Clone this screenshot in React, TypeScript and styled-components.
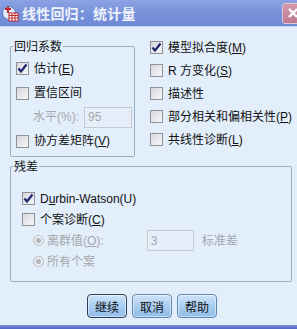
import styled, { createGlobalStyle } from 'styled-components';

const GlobalStyle = createGlobalStyle`
  html, body {
    margin: 0;
    padding: 0;
    background: #e3eefb;
  }
  body {
    font-family: "Liberation Sans", "Noto Sans CJK SC", sans-serif;
    font-size: 12px;
    color: #111;
  }
`;

const StWindow = styled.div`
  width: 297px;
  height: 329px;
  display: flex;
  flex-direction: column;
  overflow: hidden;
  background: #e3eefb;
`;

const StTitleBar = styled.div`
  height: 27px;
  flex-shrink: 0;
  display: flex;
  align-items: center;
  padding-left: 2px;
  background: linear-gradient(#8ba3e3, #7690da 55%, #6f8ad8);
  border-bottom: 1px solid #c9d6f2;
  box-sizing: border-box;
`;

const StTitle = styled.span`
  margin-left: 3px;
  font-family: "Noto Sans CJK SC", sans-serif;
  font-size: 14px;
  font-weight: bold;
  color: #eef2fb;
  letter-spacing: 0.2px;
  flex: 1;
`;

const StClose = styled.div`
  width: 20px;
  height: 19px;
  margin-right: -7px;
  border-radius: 3px;
  border: 1px solid #e3c6d3;
  background: linear-gradient(#d49aaa, #bf7a90);
  display: flex;
  align-items: center;
  justify-content: center;
`;

const StBody = styled.div`
  flex: 1;
  padding: 12px 5px 0 10px;
  display: flex;
  flex-direction: column;
`;

const StTop = styled.div`
  display: flex;
`;

const StGroup = styled.fieldset<{ $width: number }>`
  margin: 0;
  padding: 0;
  min-width: 0;
  width: ${(p) => p.$width}px;
  box-sizing: border-box;
  border: 1px solid #9aafc6;
  border-radius: 2px;
`;

const StLegend = styled.legend`
  font-family: "Noto Sans CJK SC", sans-serif;
  font-size: 12px;
  line-height: 14px;
  padding: 0 1px;
  margin-left: 2px;
  color: #111;
`;

const StGroupContent = styled.div<{ $pt: number; $pl: number; $pb: number }>`
  display: flex;
  flex-direction: column;
  padding: ${(p) => p.$pt}px 0 ${(p) => p.$pb}px ${(p) => p.$pl}px;
`;

const StRow = styled.div<{ $h: number; $indent?: number }>`
  height: ${(p) => p.$h}px;
  display: flex;
  align-items: center;
  padding-left: ${(p) => p.$indent ?? 0}px;
  white-space: nowrap;
`;

const StLabel = styled.span<{ $disabled?: boolean; $gap?: number }>`
  margin-left: ${(p) => p.$gap ?? 5}px;
  font-family: "Liberation Sans", "Noto Sans CJK SC", sans-serif;
  font-size: 12px;
  line-height: 16px;
  color: ${(p) => (p.$disabled ? '#a3a7ad' : '#111')};
  u {
    text-underline-offset: 1px;
  }
`;

const StBox = styled.span`
  width: 13px;
  height: 13px;
  box-sizing: border-box;
  border: 1px solid #8f9296;
  background: linear-gradient(135deg, #d6d8dc, #f7f7f8);
  display: inline-flex;
  align-items: center;
  justify-content: center;
  flex-shrink: 0;
`;

const StRadio = styled.span`
  width: 11px;
  height: 11px;
  box-sizing: border-box;
  border-radius: 50%;
  border: 1px solid #b7bbc0;
  background: #eceef1;
  display: inline-flex;
  align-items: center;
  justify-content: center;
  flex-shrink: 0;
`;

const StDot = styled.span`
  width: 5px;
  height: 5px;
  border-radius: 50%;
  background: #b3b7bc;
`;

const StInput = styled.div<{ $w: number; $h: number; $ml: number }>`
  width: ${(p) => p.$w}px;
  height: ${(p) => p.$h}px;
  margin-left: ${(p) => p.$ml}px;
  box-sizing: border-box;
  border: 1px solid #c5cad1;
  background: #e6eff9;
  color: #a3a7ad;
  font-family: "Liberation Sans", sans-serif;
  font-size: 12px;
  display: flex;
  align-items: center;
  padding-left: 3px;
`;

const StRightCol = styled.div`
  display: flex;
  flex-direction: column;
  margin-left: 15px;
  margin-top: -3px;
`;

const StResidual = styled.div`
  margin-top: 2px;
`;

const StButtons = styled.div`
  display: flex;
  justify-content: center;
  gap: 5px;
  margin-top: 12px;
  padding-left: 2px;
`;

const StButton = styled.button<{ $default?: boolean }>`
  width: 40px;
  height: 24px;
  padding: 0;
  border-radius: 4px;
  border: 1px solid ${(p) => (p.$default ? '#2c3f5c' : '#5d87b4')};
  background: linear-gradient(#cfe4f8, #a9cdf0 50%, #8fbde9);
  font-family: "Noto Sans CJK SC", sans-serif;
  font-size: 12px;
  color: #111;
  box-shadow: inset 0 0 0 1px rgba(255, 255, 255, 0.5);
`;

const StBottomBar = styled.div`
  height: 4px;
  flex-shrink: 0;
  background: linear-gradient(#7b8fdb, #5064c4);
`;

const Check = ({ checked }: { checked?: boolean }) => (
  <StBox>
    {checked && (
      <svg width="11" height="11" viewBox="0 0 11 11">
        <path d="M1.5 5.5 L4 8.5 L9.5 1.5" fill="none" stroke="#1f2470" strokeWidth="2.2" />
      </svg>
    )}
  </StBox>
);

const Radio = () => (
  <StRadio>
    <StDot />
  </StRadio>
);

const AppIcon = () => (
  <svg width="17" height="17" viewBox="0 0 17 17">
    <circle cx="7" cy="8" r="6.5" fill="#dfe8f6" stroke="#5a78b8" />
    <path d="M3 4 H9 M6 1.5 V8" stroke="#c0262b" strokeWidth="2" />
    <rect x="7" y="8" width="9" height="8" fill="#fff" stroke="#c0262b" />
    <path d="M7 10.5 H16 M7 13 H16 M10 8 V16 M13 8 V16" stroke="#c0262b" strokeWidth="1" />
  </svg>
);

export default function App() {
  return (
    <>
      <GlobalStyle />
      <StWindow>
        <StTitleBar>
          <AppIcon />
          <StTitle>线性回归：统计量</StTitle>
          <StClose>
            <svg width="12" height="12" viewBox="0 0 12 12">
              <path d="M2 2 L10 10 M10 2 L2 10" stroke="#fff" strokeWidth="2.4" />
            </svg>
          </StClose>
        </StTitleBar>
        <StBody>
          <StTop>
            <StGroup $width={128}>
              <StLegend>回归系数</StLegend>
              <StGroupContent $pt={3} $pl={5} $pb={3}>
                <StRow $h={25}>
                  <Check checked />
                  <StLabel>估计(<u>E</u>)</StLabel>
                </StRow>
                <StRow $h={24}>
                  <Check />
                  <StLabel>置信区间</StLabel>
                </StRow>
                <StRow $h={24} $indent={17}>
                  <StLabel $disabled $gap={0}>水平(%):</StLabel>
                  <StInput $w={48} $h={21} $ml={5}>95</StInput>
                </StRow>
                <StRow $h={24}>
                  <Check />
                  <StLabel>协方差矩阵(<u>V</u>)</StLabel>
                </StRow>
              </StGroupContent>
            </StGroup>
            <StRightCol>
              <StRow $h={23}>
                <Check checked />
                <StLabel>模型拟合度(<u>M</u>)</StLabel>
              </StRow>
              <StRow $h={23}>
                <Check />
                <StLabel>R 方变化(<u>S</u>)</StLabel>
              </StRow>
              <StRow $h={23}>
                <Check />
                <StLabel>描述性</StLabel>
              </StRow>
              <StRow $h={23}>
                <Check />
                <StLabel>部分相关和偏相关性(<u>P</u>)</StLabel>
              </StRow>
              <StRow $h={23}>
                <Check />
                <StLabel>共线性诊断(<u>L</u>)</StLabel>
              </StRow>
            </StRightCol>
          </StTop>
          <StResidual>
            <StGroup $width={282}>
              <StLegend>残差</StLegend>
              <StGroupContent $pt={15} $pl={11} $pb={9}>
                <StRow $h={21}>
                  <Check checked />
                  <StLabel>D<u>u</u>rbin-Watson(U)</StLabel>
                </StRow>
                <StRow $h={21}>
                  <Check />
                  <StLabel>个案诊断(<u>C</u>)</StLabel>
                </StRow>
                <StRow $h={21} $indent={11}>
                  <Radio />
                  <StLabel $disabled $gap={3}>离群值(<u>O</u>):</StLabel>
                  <StInput $w={47} $h={21} $ml={43}>3</StInput>
                  <StLabel $disabled $gap={8}>标准差</StLabel>
                </StRow>
                <StRow $h={21} $indent={11}>
                  <Radio />
                  <StLabel $disabled $gap={3}>所有个案</StLabel>
                </StRow>
              </StGroupContent>
            </StGroup>
          </StResidual>
          <StButtons>
            <StButton $default>继续</StButton>
            <StButton>取消</StButton>
            <StButton>帮助</StButton>
          </StButtons>
        </StBody>
        <StBottomBar />
      </StWindow>
    </>
  );
}
